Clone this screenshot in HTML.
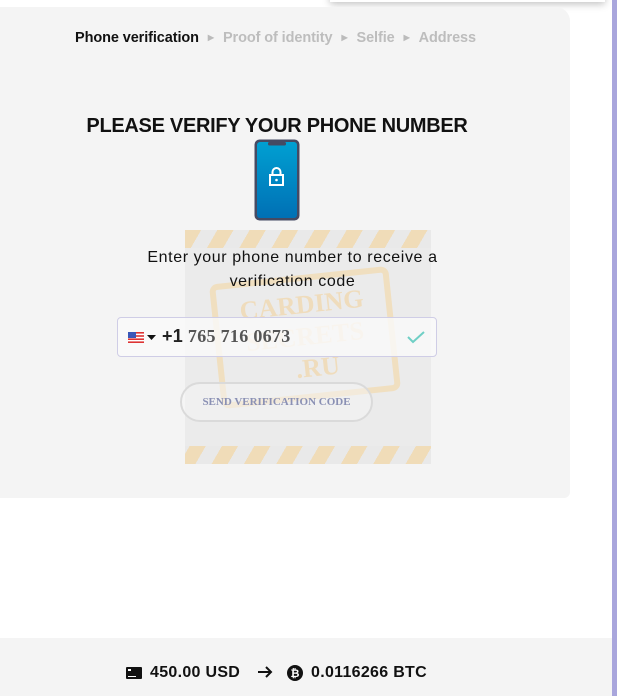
<!DOCTYPE html>
<html><head><style>
body{margin:0;width:617px;height:696px;background:#fff;position:relative;overflow:hidden;font-family:"Liberation Sans",sans-serif}
.card{position:absolute;left:0;top:7px;width:570px;height:491px;background:#f4f4f4;border-radius:0 14px 6px 0}
.shadow{position:absolute;left:330px;top:-10px;width:275px;height:12px;box-shadow:0 2px 8px rgba(0,0,0,.25);background:#fff}
.purple{position:absolute;left:612px;top:0;width:5px;height:696px;background:#a9a6dc}
.steps{position:absolute;top:30px;left:75px;font-size:14.5px;font-weight:bold;color:#bdbdbd;white-space:nowrap;letter-spacing:-.1px}
.steps b{color:#111}
.steps i{font-style:normal;font-size:8px;margin:0 9px;color:#bbb;position:relative;top:-2px}
h1{position:absolute;top:115px;left:86px;width:382px;text-align:center;margin:0;font-size:20px;font-weight:bold;color:#111;white-space:nowrap;letter-spacing:-.3px}
.wm{position:absolute;left:185px;top:230px;width:246px;height:234px;background:#e9e9e9;
background-image:repeating-linear-gradient(120deg,#f0dcb8 0 14px,#e9e9e9 14px 28px);}
.wm .in{position:absolute;left:0;right:0;top:18px;bottom:18px;background:#ebebeb}
.wm .st{position:absolute;left:30px;top:45px;width:180px;height:125px;border:6px solid #f0dfc0;border-radius:8px;transform:rotate(-6deg);color:#efdcbc;font:bold 26px "Liberation Serif",serif;text-align:center;line-height:32px;padding-top:8px;box-sizing:border-box}
.txt{position:absolute;top:246px;left:120px;width:345px;text-align:center;font-size:16px;line-height:24px;color:#111;letter-spacing:.6px}
.inp{position:absolute;left:117px;top:317px;width:318px;height:38px;border:1px solid #cfcde6;border-radius:4px;background:rgba(250,250,250,.8)}
.num{position:absolute;left:44px;top:8px;font-size:18px;font-weight:bold;color:#555;font-family:"Liberation Serif",serif;letter-spacing:.3px}
.btn{position:absolute;left:180px;top:382px;width:193px;height:40px;border:2px solid #dadada;border-radius:22px;box-sizing:border-box;text-align:center;font-size:11px;font-weight:bold;color:#8a90b4;line-height:37px;background:rgba(245,245,245,.5);font-family:"Liberation Serif",serif}
.foot{position:absolute;left:0;top:638px;width:612px;height:58px;background:#f4f4f4}
.ft{position:absolute;top:664px;font-size:16px;font-weight:bold;color:#111;white-space:nowrap;letter-spacing:.3px}
</style></head><body>
<div class="shadow"></div>
<div class="card"></div>
<div class="purple"></div>
<div class="steps"><b>Phone verification</b><i>▶</i>Proof of identity<i>▶</i>Selfie<i>▶</i>Address</div>
<h1>PLEASE VERIFY YOUR PHONE NUMBER</h1>
<svg style="position:absolute;left:254px;top:139px" width="46" height="82" viewBox="0 0 46 82">
<defs><linearGradient id="g" x1="0" y1="0" x2="0" y2="1"><stop offset="0" stop-color="#00a0d2"/><stop offset="1" stop-color="#0070b5"/></linearGradient></defs>
<rect x="0.5" y="0.5" width="45" height="81" rx="5" fill="#454a63"/>
<rect x="3" y="3" width="40" height="76" rx="3" fill="url(#g)"/>
<rect x="14" y="3" width="18" height="3.5" rx="1.5" fill="#454a63"/>
<rect x="16" y="36" width="13" height="10" fill="none" stroke="#fff" stroke-width="2"/>
<path d="M18.5 36v-3a4 4 0 0 1 8 0v3" fill="none" stroke="#fff" stroke-width="2"/>
<circle cx="22.5" cy="41" r="1.3" fill="#fff"/>
</svg>
<div class="wm"><div class="in"></div><div class="st">CARDING<br>SECRETS<br>&nbsp;&nbsp;&nbsp;.RU</div></div>
<div class="txt">Enter your phone number to receive a verification code</div>
<div class="inp">
<svg style="position:absolute;left:10px;top:14px" width="16" height="11"><rect width="16" height="11" fill="#fff"/><g fill="#d33"><rect y="0" width="16" height="1.6"/><rect y="3.2" width="16" height="1.6"/><rect y="6.4" width="16" height="1.6"/><rect y="9.4" width="16" height="1.6"/></g><rect width="8" height="6" fill="#3a57b8"/></svg>
<svg style="position:absolute;left:29px;top:17px" width="9" height="5"><path d="M0 0h9L4.5 5z" fill="#111"/></svg>
<div class="num"><span style="color:#222;font-family:'Liberation Sans',sans-serif">+1</span> 765 716 0673</div>
<svg style="position:absolute;left:289px;top:13px" width="18" height="13"><path d="M1 6l5 5L17 1" fill="none" stroke="#6fcfc5" stroke-width="2"/></svg>
</div>
<div class="btn">SEND VERIFICATION CODE</div>
<div class="foot"></div>
<svg style="position:absolute;left:126px;top:667px" width="16" height="12"><rect width="16" height="12" rx="1" fill="#111"/><rect x="2" y="2" width="3" height="2" fill="#fff"/><rect x="2" y="9" width="8" height="1" fill="#fff"/></svg>
<div class="ft" style="left:150px">450.00 USD</div>
<svg style="position:absolute;left:257px;top:666px" width="16" height="12"><path d="M1 6h13M9 1l5 5-5 5" fill="none" stroke="#111" stroke-width="2"/></svg>
<svg style="position:absolute;left:287px;top:665px" width="16" height="16"><circle cx="8" cy="8" r="8" fill="#111"/><text x="8" y="12" font-size="11" font-weight="bold" fill="#fff" text-anchor="middle" font-family="Liberation Sans">₿</text></svg>
<div class="ft" style="left:311px">0.0116266 BTC</div>
</body></html>
